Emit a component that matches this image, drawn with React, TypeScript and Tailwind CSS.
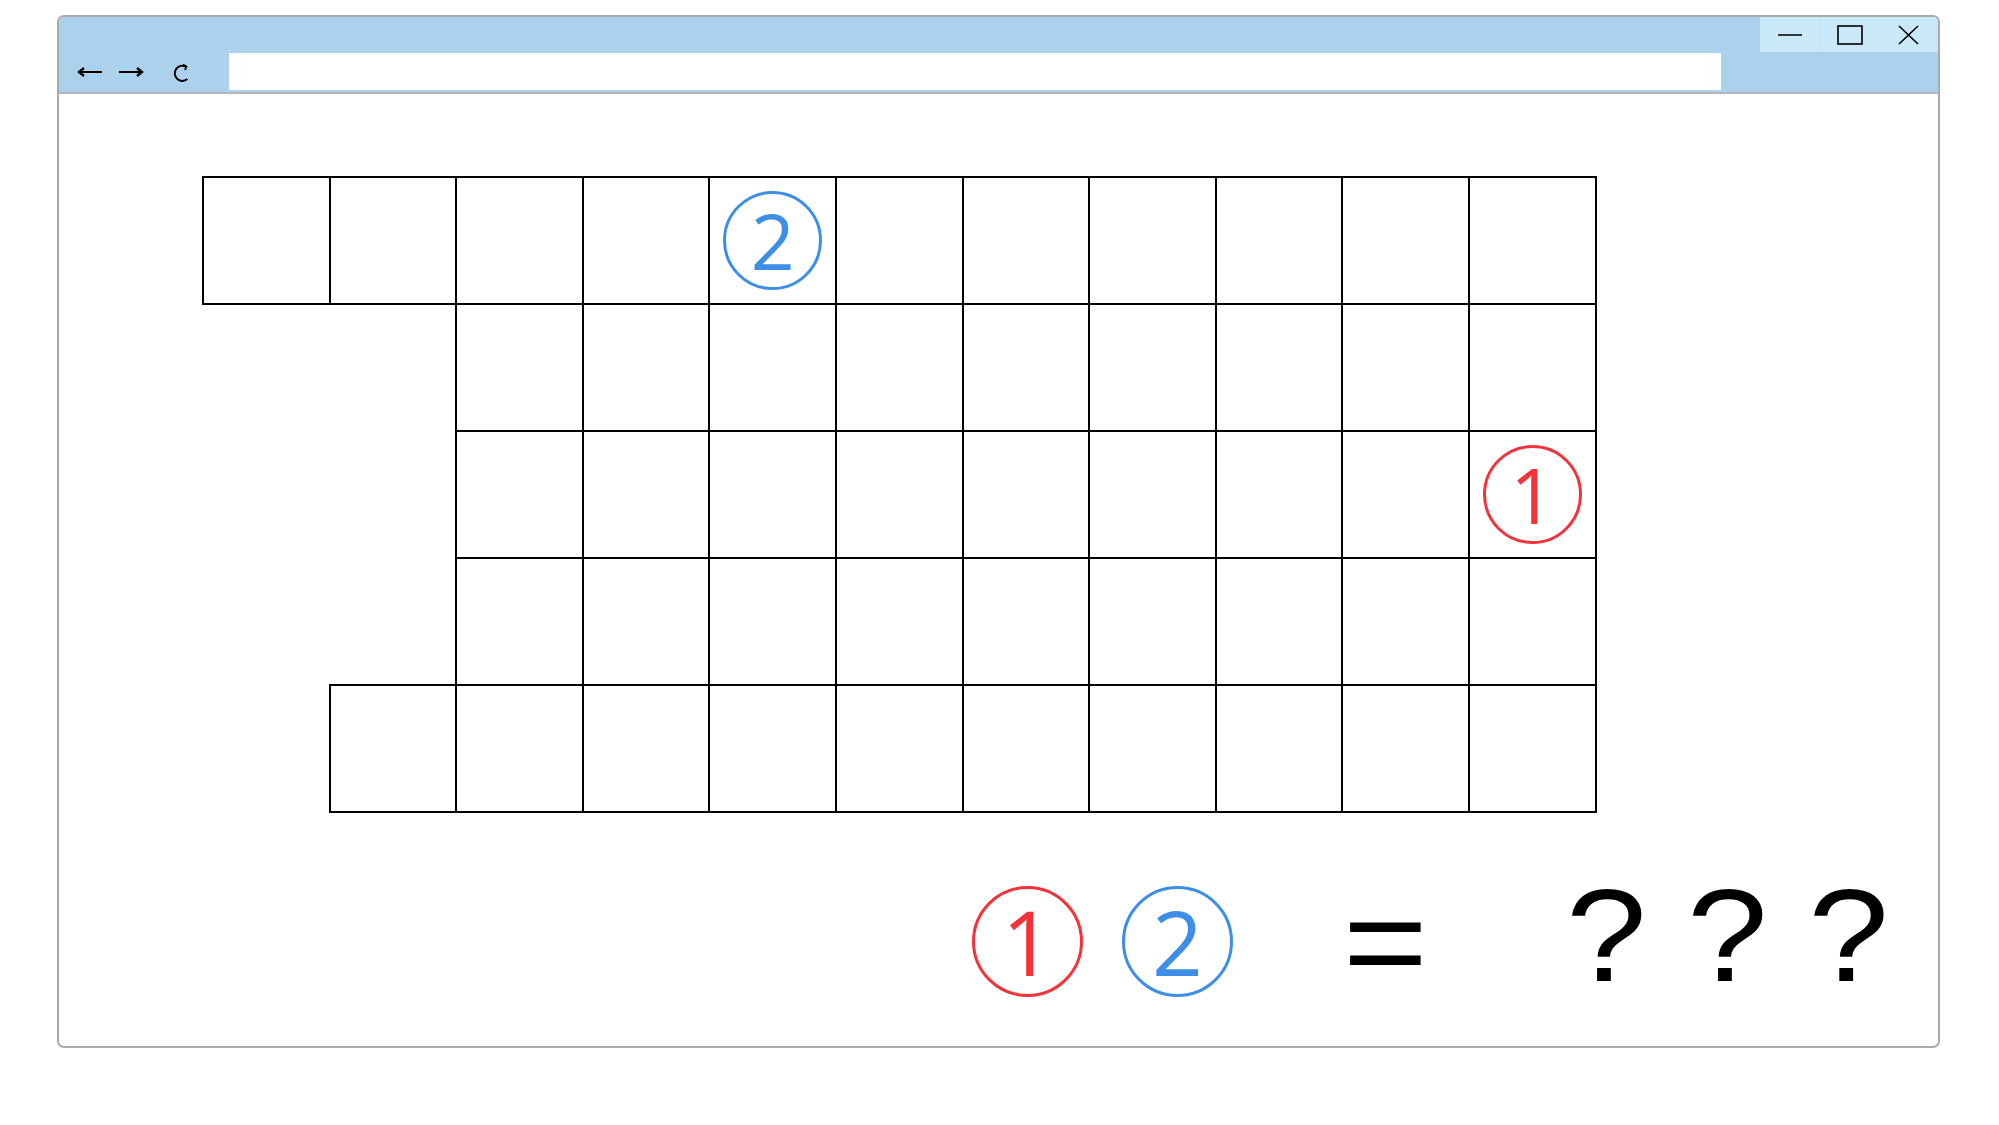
import React from 'react'

const RED = 'text-[#f2333a] border-[#f2333a]'
const BLUE = 'text-[#3d8ee6] border-[#3d8ee6]'

// which column each row of the board starts at
const rowStarts = [0, 2, 2, 2, 1]

const Circled: React.FC<{ n: string; big?: boolean; tone: string }> = ({ n, big, tone }) => (
  <div
    className={`flex shrink-0 items-center justify-center rounded-full border-[3px] ${tone} ${
      big ? 'h-[111px] w-[111px] text-[89px]' : 'h-[99px] w-[99px] text-[77px]'
    } leading-none font-medium font-['Open_Sans',sans-serif]`}
  >
    <span>{n}</span>
  </div>
)

const NavIcons = () => (
  <div className="flex items-center">
    <svg width="26" height="12" viewBox="0 0 26 12" className="ml-[18px]">
      <path d="M2 6H25" stroke="black" strokeWidth="2" />
      <path d="M7 2L2 6L7 10" stroke="black" strokeWidth="2.4" fill="none" />
    </svg>
    <svg width="26" height="12" viewBox="0 0 26 12" className="ml-[15px]">
      <path d="M1 6H24" stroke="black" strokeWidth="2" />
      <path d="M19 2L24 6L19 10" stroke="black" strokeWidth="2.4" fill="none" />
    </svg>
    <svg width="18" height="20" viewBox="0 0 18 20" className="ml-[29px] mt-[3px]">
      <path d="M13 3.6A7.6 7.6 0 1 0 14.4 16" stroke="black" strokeWidth="2" fill="none" />
      <path d="M10 1.6L13.4 3.6L12 7" stroke="black" strokeWidth="1.8" fill="none" />
    </svg>
  </div>
)

const WindowControls = () => (
  <div className="flex h-[35px] bg-[#c9e8f8]">
    <div className="flex w-[59px] items-center justify-center">
      <svg width="24" height="4" viewBox="0 0 24 4">
        <path d="M0 2H24" stroke="black" strokeWidth="1.6" />
      </svg>
    </div>
    <div className="flex w-[60px] items-center justify-center border-l border-[#bfe0f2]">
      <svg width="26" height="20" viewBox="0 0 26 20">
        <rect x="1" y="1" width="24" height="18" stroke="black" strokeWidth="1.6" fill="none" />
      </svg>
    </div>
    <div className="flex w-[59px] items-center justify-center">
      <svg width="21" height="20" viewBox="0 0 21 20">
        <path d="M1 1L20 19M20 1L1 19" stroke="black" strokeWidth="1.6" />
      </svg>
    </div>
  </div>
)

export default function App() {
  return (
    <div className="h-[1125px] w-[1999px] overflow-hidden bg-white pl-[57px] pt-[15px]">
      <div className="flex h-[1033px] w-[1883px] flex-col overflow-hidden rounded-[7px] border-2 border-[#a9a9a9] bg-white">
        {/* title bar */}
        <div className="flex h-[77px] shrink-0 flex-col border-b-2 border-[#b3b8bd] bg-[#acd1ec]">
          <div className="flex justify-end">
            <WindowControls />
          </div>
          <div className="mt-px flex h-[37px] items-center">
            <NavIcons />
            <div className="ml-[38px] h-[37px] w-[1492px] bg-white" />
          </div>
        </div>

        {/* board */}
        <div className="ml-[144px] mt-[83px] grid grid-cols-[repeat(11,126.6px)] grid-rows-[repeat(5,127px)]">
          {rowStarts.map((start, r) =>
            Array.from({ length: 11 }).map((_, c) => (
              <div
                key={`${r}-${c}`}
                className={
                  c >= start
                    ? 'flex items-center justify-center outline-2 -outline-offset-1 outline-black'
                    : ''
                }
              >
                {r === 0 && c === 4 && <Circled n="2" tone={BLUE} />}
                {r === 2 && c === 10 && <Circled n="1" tone={RED} />}
              </div>
            )),
          )}
        </div>

        {/* equation */}
        <div className="ml-[913px] mt-[74px] flex h-[111px] items-center">
          <Circled n="1" big tone={RED} />
          <div className="ml-[39px]">
            <Circled n="2" big tone={BLUE} />
          </div>
          <span className="ml-[110px] origin-left scale-x-[1.1] text-[132px] leading-none text-black font-['Liberation_Sans',Arial,sans-serif]">
            =
          </span>
          <span className="mb-[12px] ml-[146px] origin-left scale-x-[1.1] whitespace-pre text-[132px] leading-none text-black font-['Liberation_Sans',Arial,sans-serif]">
            ? ? ?
          </span>
        </div>
      </div>
    </div>
  )
}
